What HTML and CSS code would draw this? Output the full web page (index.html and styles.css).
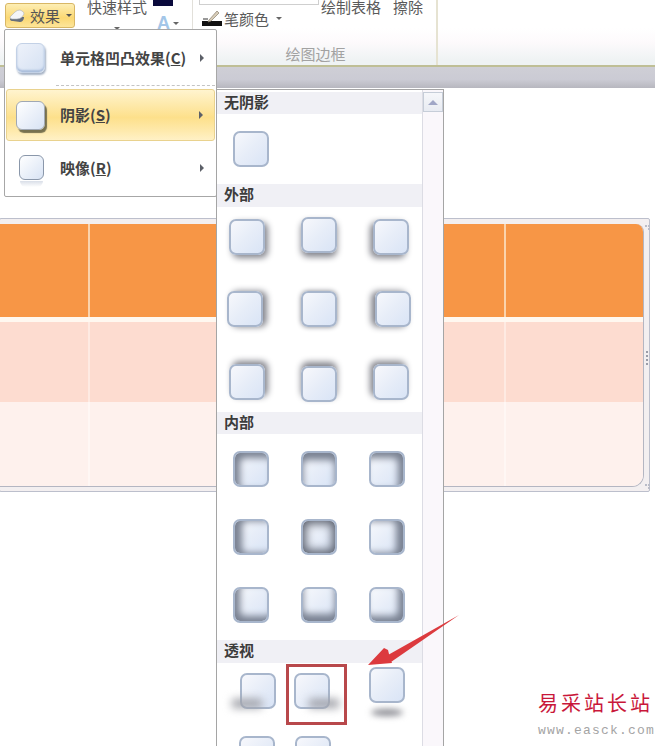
FILE: index.html
```html
<!DOCTYPE html>
<html lang="zh-CN">
<head>
    <meta charset="UTF-8">
    <meta name="viewport" content="width=device-width, initial-scale=1.0">
    <title>效果 - 阴影</title>
    <link rel="stylesheet" href="styles.css">
</head>
<body>
<div class="page">

    <div class="ribbon">
        <div class="group group-styles">
            <button class="effect-btn">
                <svg class="effect-icon" width="16" height="14" viewBox="0 0 16 14"><path d="M1 10 Q1 12 4 12 L11 13 Q14 13 15 9 L15 8 L2 8Z" fill="#666f7b"/><path d="M1 8 L6 3 Q8 1 11 1 L13 2 Q15 3 15 5 L13 8 Q11 10 8 10 L3 10 Q1 10 1 8Z" fill="#f4f5f8" stroke="#aeb2b8" stroke-width=".6"/></svg>
                <span>效果</span>
                <i class="caret"></i>
            </button>
            <div class="quick-col">
                <span class="ribbon-text">快速样式</span>
                <i class="caret"></i>
            </div>
            <div class="color-col">
                <div class="navy-bar"></div>
                <div class="letter-row"><span class="letter-a">A</span><i class="caret"></i></div>
            </div>
        </div>
        <div class="group group-draw">
            <div class="draw-top">
                <div class="draw-left">
                    <div class="line-box"></div>
                    <div class="pen-row">
                        <svg class="pen-icon" width="20" height="18" viewBox="0 0 20 18"><rect x="0" y="12" width="20" height="5" fill="#111"/><path d="M7 11 L15 2 L17 4 L9 12 L6 13Z" fill="#d8cdb8" stroke="#8a7f70" stroke-width=".7"/><path d="M1 10h5" stroke="#333" stroke-width="1"/></svg>
                        <span class="ribbon-text">笔颜色</span>
                        <i class="caret"></i>
                    </div>
                </div>
                <span class="ribbon-text draw-action">绘制表格</span>
                <span class="ribbon-text draw-action">擦除</span>
            </div>
            <div class="group-label">绘图边框</div>
        </div>
        <div class="group group-rest"></div>
    </div>
    <div class="band"></div>

    <div class="doc">
        <div class="table-frame">
            <div class="tbl">
                <div class="tbl-row row-head"><div class="cell"></div><div class="cell"></div><div class="cell"></div></div>
                <div class="tbl-row row-odd"><div class="cell"></div><div class="cell"></div><div class="cell"></div></div>
                <div class="tbl-row row-even"><div class="cell"></div><div class="cell"></div><div class="cell"></div></div>
            </div>
            <div class="handle-strip">
                <i class="dots"></i><i class="dots dots-mid"></i><i class="dots"></i>
            </div>
        </div>
    </div>

    <div class="menu">
        <div class="menu-item">
            <span class="menu-icon"><span class="icon-bevel"></span></span>
            <span class="menu-text">单元格凹凸效果(<u>C</u>)</span>
            <i class="arrow"></i>
        </div>
        <div class="menu-sep"></div>
        <div class="menu-item is-active">
            <span class="menu-icon"><span class="icon-shadow"></span></span>
            <span class="menu-text">阴影(<u>S</u>)</span>
            <i class="arrow"></i>
        </div>
        <div class="menu-item is-last">
            <span class="menu-icon"><span class="icon-reflect"></span></span>
            <span class="menu-text">映像(<u>R</u>)</span>
            <i class="arrow"></i>
        </div>
    </div>

    <div class="submenu">
        <div class="gallery">
            <div class="gallery-head">无阴影</div>
            <div class="grid grid-none"><div class="swatch"></div></div>

            <div class="gallery-head head-outer">外部</div>
            <div class="grid grid-outer">
                <div class="swatch o1"></div><div class="swatch o2"></div><div class="swatch o3"></div>
                <div class="swatch o4"></div><div class="swatch o5"></div><div class="swatch o6"></div>
                <div class="swatch o7"></div><div class="swatch o8"></div><div class="swatch o9"></div>
            </div>

            <div class="gallery-head head-inner">内部</div>
            <div class="grid grid-inner">
                <div class="swatch i1"></div><div class="swatch i2"></div><div class="swatch i3"></div>
                <div class="swatch i4"></div><div class="swatch i5"></div><div class="swatch i6"></div>
                <div class="swatch i7"></div><div class="swatch i8"></div><div class="swatch i9"></div>
            </div>

            <div class="gallery-head head-persp">透视</div>
            <div class="grid grid-persp">
                <div class="swatch p1"></div><div class="swatch p2"></div><div class="swatch p3"></div>
                <div class="swatch p4"></div><div class="swatch p5"></div>
            </div>
        </div>
        <div class="scroll-strip">
            <div class="scroll-up"><i></i></div>
        </div>
    </div>

    <div class="red-box"></div>
    <svg class="red-arrow" width="100" height="56" viewBox="0 0 100 56">
        <path d="M95 1 L24 41 L27 48 Z M24 36 L20 34 L4 51 L28 49 L26 44Z" fill="#dc3a3e"/>
    </svg>

    <div class="watermark">
        <div class="wm-title">易采站长站</div>
        <div class="wm-url">www.easck.com</div>
    </div>
</div>
</body>
</html>
```

FILE: styles.css
```css
:root {
    --ui-font: "Noto Sans CJK SC", "Liberation Sans", sans-serif;
    --swatch-shadow: #85868e;
    --inner-shadow: #7a8292;
}

* { box-sizing: border-box; }

html, body {
    margin: 0;
    padding: 0;
    background: #fff;
}

.page {
    position: relative;
    width: 655px;
    height: 746px;
    overflow: hidden;
    font-family: var(--ui-font);
    color: #444;
}

/* ribbon */
.ribbon {
    display: flex;
    height: 67px;
    background: linear-gradient(#fff 0, #fff 28px, #fdfafc 42px, #eff3f4 60px);
    border-bottom: 2px solid #bfbf96;
}

.group {
    height: 65px;
    border-right: 1px solid #e2e0da;
}

.group-styles {
    display: flex;
    align-items: flex-start;
    width: 193px;
    padding: 3px 0 0 5px;
}

.group-draw {
    width: 245px;
    border-right: 2px solid #e6e3d2;
}

.group-rest {
    flex: 1;
    border: 0;
}

.caret {
    display: inline-block;
    border-left: 3px solid transparent;
    border-right: 3px solid transparent;
    border-top: 3px solid #666;
}

.ribbon-text {
    font-size: 15px;
    line-height: 15px;
    color: #5a5a5a;
    white-space: nowrap;
}

.effect-btn {
    display: flex;
    align-items: center;
    width: 70px;
    height: 25px;
    padding: 0 0 0 3px;
    border: 1px solid #d8b765;
    border-radius: 3px;
    background: linear-gradient(#fdeeb4, #fbd873 60%, #fde59a);
    font-family: var(--ui-font);
    font-size: 15px;
    line-height: 15px;
    color: #555;
}

.effect-icon { margin-right: 5px; }
.effect-btn .caret { margin-left: 6px; border-top-color: #555; }

.quick-col {
    display: flex;
    flex-direction: column;
    align-items: center;
    width: 60px;
    margin: -4px 0 0 12px;
}
.quick-col .caret { margin-top: 13px; }

.color-col {
    width: 30px;
    margin: -3px 0 0 6px;
}

.navy-bar {
    width: 20px;
    height: 6px;
    background: #0a0a3c;
}

.letter-row {
    display: flex;
    align-items: center;
    margin-top: 7px;
}

.letter-a {
    font-family: "Liberation Sans", sans-serif;
    font-weight: bold;
    font-size: 18px;
    line-height: 20px;
    margin-left: 4px;
    color: #a3c6e8;
}
.letter-row .caret { margin-left: 3px; }

.draw-top {
    display: flex;
    align-items: flex-start;
    height: 44px;
}

.draw-top .draw-action { margin-top: -1px; }

.draw-left {
    width: 128px;
    padding-left: 6px;
}

.line-box {
    width: 120px;
    height: 5px;
    background: #fff;
    border: 1px solid #cfcfcf;
    border-top: 0;
}

.pen-row {
    display: flex;
    align-items: center;
    margin-top: 4px;
    margin-left: 3px;
}
.pen-icon { margin-right: 2px; }
.pen-row .caret { margin-left: 7px; }

.draw-action { margin-right: 12px; }

.group-label {
    padding-left: 2px;
    text-align: center;
    font-size: 15px;
    line-height: 20px;
    color: #a2a2a2;
}

.band {
    height: 21px;
    background: linear-gradient(#cfcfd6, #cbcbd4 60%, #b7b7bf);
}

/* table */
.doc {
    padding-top: 130px;
}

.table-frame {
    display: flex;
    width: 651px;
    height: 274px;
    margin-left: -1px;
    padding-top: 5px;
    background: #f3eff0;
    border: 1px solid #bcbfcc;
    border-radius: 2px;
}

.tbl {
    width: 644px;
    height: 263px;
    border-bottom: 1px solid #b4b6c2;
    border-right: 1px solid #b4b6c2;
    border-radius: 0 8px 12px 0;
    overflow: hidden;
}

.tbl-row {
    display: grid;
    grid-template-columns: 88px 416px 1fr;
}

.cell + .cell { border-left: 2px solid; }

.row-head {
    height: 98px;
    background: #f79646;
    border-bottom: 5px solid #fff8f0;
}
.row-head .cell + .cell { border-left-color: #fbd3ac; }

.row-odd {
    height: 80px;
    background: #fddcd0;
}
.row-odd .cell + .cell { border-left-color: #feeae2; }

.row-even {
    height: 85px;
    background: #fef1ed;
}
.row-even .cell + .cell { border-left-color: #fff7f4; }

.handle-strip {
    flex: 1;
    display: flex;
    flex-direction: column;
    justify-content: space-between;
    align-items: center;
    padding: 1px 0 5px;
}

.dots {
    display: block;
    width: 2px;
    height: 2px;
    background: #b9bcc8;
    box-shadow: 3px 0 #b9bcc8, 3px 3px #b9bcc8;
    margin-left: -2px;
}

.dots-mid {
    background: #9a9ca8;
    height: 2px;
    margin-left: 0;
    box-shadow: 0 4px #9a9ca8, 0 8px #9a9ca8, 0 12px #9a9ca8;
    margin-bottom: 8px;
}

/* first menu */
.menu {
    position: absolute;
    left: 4px;
    top: 29px;
    width: 213px;
    height: 168px;
    padding: 0 1px;
    background: #fff;
    border: 1px solid #a7a7a7;
    border-radius: 2px;
}

.menu-item {
    display: flex;
    align-items: center;
    height: 55px;
    padding-left: 10px;
    border: 1px solid transparent;
    border-left: 0;
    border-right: 0;
}

.menu-item.is-active {
    height: 52px;
    border: 1px solid #e9d28e;
    border-radius: 3px;
    padding-left: 9px;
    background: linear-gradient(#fff4cf, #fde08b 55%, #fee9aa 80%, #fff1c6);
}

.menu-item.is-last {
    height: 53px;
}

.menu-icon {
    width: 44px;
    flex: none;
}

.menu-text {
    flex: 1;
    font-size: 15px;
    line-height: 18px;
    font-weight: bold;
    color: #444;
    white-space: nowrap;
}

.arrow {
    flex: none;
    margin-right: 11px;
    border-top: 4px solid transparent;
    border-bottom: 4px solid transparent;
    border-left: 4px solid #5c6068;
}

.menu-sep {
    height: 1px;
    margin: 0 0 3px 50px;
    border-top: 1px dashed #c4c4c4;
}

.icon-bevel, .icon-shadow, .icon-reflect {
    display: block;
    border-radius: 6px;
    background: linear-gradient(135deg, #fff, #d8e3f4);
}

.icon-bevel {
    width: 29px;
    height: 30px;
    border: 1px solid #c3d1e6;
    background: linear-gradient(135deg, #eef2fa, #d5e1f3);
    box-shadow: inset 0 -2px 2px #a9bddb, 1px 2px 2px #a5b2c5;
}

.icon-shadow {
    width: 29px;
    height: 29px;
    border: 1px solid #a0a8b4;
    box-shadow: 2px 3px 1px #77714f;
}

.icon-reflect {
    position: relative;
    width: 25px;
    height: 25px;
    margin-left: 3px;
    border: 1px solid #8a97aa;
}

.icon-reflect::after {
    content: "";
    position: absolute;
    left: 0;
    right: 0;
    top: 25px;
    height: 6px;
    border-radius: 0 0 6px 6px;
    background: linear-gradient(#d9dee8, #fff);
}

/* shadow gallery */
.submenu {
    position: absolute;
    left: 216px;
    top: 89px;
    width: 228px;
    height: 660px;
    display: flex;
    padding-top: 2px;
    background: #fff;
    border: 1px solid #a5a5a5;
    border-bottom: 0;
}

.gallery {
    width: 205px;
    flex: none;
}

.gallery-head {
    height: 22px;
    padding-left: 7px;
    font-size: 15px;
    line-height: 20px;
    font-weight: bold;
    color: #3c3c3c;
    background: #f0f0f5;
}

.head-outer { height: 23px; }
.head-persp { height: 23px; }

.scroll-strip {
    flex: 1;
    margin-top: -2px;
    padding-top: 2px;
    background: #faf7fb;
    border-left: 1px solid #dcdce4;
}

.scroll-up {
    display: flex;
    align-items: center;
    justify-content: center;
    width: 20px;
    height: 20px;
    border: 1px solid #c6cdd8;
    background: linear-gradient(#f6f7fa, #e8ebf2);
}

.scroll-up i {
    border-left: 5px solid transparent;
    border-right: 5px solid transparent;
    border-bottom: 5px solid #a0a6c6;
}

.grid {
    display: grid;
    grid-template-columns: repeat(3, 36px);
    grid-auto-rows: 36px;
}

.grid-none {
    height: 70px;
    padding: 17px 0 0 16px;
}

.grid-outer {
    height: 205px;
    padding: 12px 0 0 12px;
    column-gap: 36px;
    row-gap: 36px;
}

.grid-inner {
    height: 206px;
    padding: 17px 0 0 16px;
    column-gap: 32px;
    row-gap: 32px;
}

.grid-persp {
    padding: 10px 0 0 16px;
    column-gap: 32px;
    row-gap: 27px;
}

.swatch {
    position: relative;
    width: 36px;
    height: 36px;
    border: 2px solid #a8b6cc;
    border-radius: 7px;
    background: linear-gradient(135deg, #f7f8fc, #e7edf8 50%, #d9e4f6);
}

/* outer */
.o1 { box-shadow: 3px 3px 6px var(--swatch-shadow); }
.o2 { margin: -2px 0 0; box-shadow: 0 4px 6px var(--swatch-shadow); }
.o3 { box-shadow: -3px 3px 6px var(--swatch-shadow); }
.o4 { margin-left: -2px; box-shadow: 4px 0 6px var(--swatch-shadow); }
.o5 { box-shadow: 0 0 5px var(--swatch-shadow); }
.o6 { margin-left: 2px; box-shadow: -4px 0 6px var(--swatch-shadow); }
.o7 { margin-top: 1px; box-shadow: 3px -3px 6px var(--swatch-shadow); }
.o8 { margin-top: 3px; box-shadow: 0 -4px 6px var(--swatch-shadow); }
.o9 { margin-top: 1px; box-shadow: -3px -3px 6px var(--swatch-shadow); }

/* inner */
.i1 { box-shadow: inset 5px 5px 7px var(--inner-shadow); }
.i2 { box-shadow: inset 0 7px 7px var(--inner-shadow); }
.i3 { box-shadow: inset -5px 5px 7px var(--inner-shadow); }
.i4 { box-shadow: inset 7px 0 7px var(--inner-shadow); }
.i5 { box-shadow: inset 0 0 10px 3px #5d6370; }
.i6 { box-shadow: inset -7px 0 7px var(--inner-shadow); }
.i7 { box-shadow: inset 5px -5px 7px var(--inner-shadow); }
.i8 { box-shadow: inset 0 -7px 7px var(--inner-shadow); }
.i9 { box-shadow: inset -5px -5px 7px var(--inner-shadow); }

/* perspective */
.p1 { margin-left: 7px; }
.p2 { margin-left: -7px; }
.p3 { margin-top: -6px; }
.p4 { margin-left: 6px; }
.p5 { margin-left: -6px; }

.p1::before, .p2::before, .p3::before {
    content: "";
    position: absolute;
    z-index: -1;
    background: #a0a1a8;
    filter: blur(4px);
}

.p1, .p2, .p3 { z-index: 0; }

.p1::before {
    left: -10px;
    bottom: -1px;
    width: 30px;
    height: 9px;
}

.p2::before {
    right: -11px;
    bottom: -1px;
    width: 30px;
    height: 9px;
}

.p3::before {
    left: 0;
    top: 40px;
    width: 32px;
    height: 7px;
    border-radius: 50%;
    background: #8a8b92;
    filter: blur(3px);
}

/* annotation added on top of the screenshot */
.red-box {
    position: absolute;
    left: 286px;
    top: 664px;
    width: 61px;
    height: 61px;
    border: 3px solid #b8484b;
}

.red-arrow {
    position: absolute;
    left: 364px;
    top: 614px;
}

.watermark {
    position: absolute;
    left: 538px;
    top: 690px;
    width: 117px;
}

.wm-title {
    font-family: "Noto Sans CJK SC", sans-serif;
    font-size: 20px;
    line-height: 26px;
    letter-spacing: 3px;
    white-space: nowrap;
    color: #c9173a;
}

.wm-url {
    margin-top: 8px;
    font-family: "Liberation Mono", monospace;
    font-size: 13px;
    line-height: 14px;
    letter-spacing: 1.2px;
    white-space: nowrap;
    color: #a4a4a4;
}
```
